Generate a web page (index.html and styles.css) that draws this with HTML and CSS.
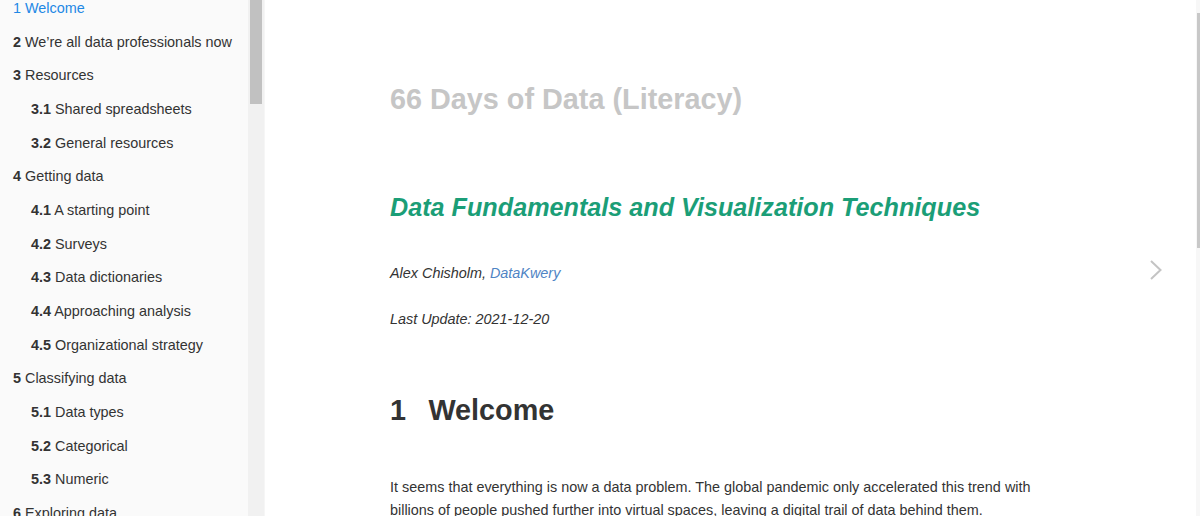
FILE: index.html
```html
<!DOCTYPE html>
<html lang="en">
<head>
    <meta charset="UTF-8">
    <meta name="viewport" content="width=device-width, initial-scale=1.0">
    <title>66 Days of Data (Literacy)</title>
    <link rel="stylesheet" href="styles.css">
</head>
<body>
    <div class="book">
        <nav class="book-summary">
            <ul class="summary">
                <li class="chapter active"><a href="#"><b>1</b> Welcome</a></li>
                <li class="chapter"><a href="#"><b>2</b> We’re all data professionals now</a></li>
                <li class="chapter"><a href="#"><b>3</b> Resources</a>
                    <ul>
                        <li class="chapter"><a href="#"><b>3.1</b> Shared spreadsheets</a></li>
                        <li class="chapter"><a href="#"><b>3.2</b> General resources</a></li>
                    </ul>
                </li>
                <li class="chapter"><a href="#"><b>4</b> Getting data</a>
                    <ul>
                        <li class="chapter"><a href="#"><b>4.1</b> A starting point</a></li>
                        <li class="chapter"><a href="#"><b>4.2</b> Surveys</a></li>
                        <li class="chapter"><a href="#"><b>4.3</b> Data dictionaries</a></li>
                        <li class="chapter"><a href="#"><b>4.4</b> Approaching analysis</a></li>
                        <li class="chapter"><a href="#"><b>4.5</b> Organizational strategy</a></li>
                    </ul>
                </li>
                <li class="chapter"><a href="#"><b>5</b> Classifying data</a>
                    <ul>
                        <li class="chapter"><a href="#"><b>5.1</b> Data types</a></li>
                        <li class="chapter"><a href="#"><b>5.2</b> Categorical</a></li>
                        <li class="chapter"><a href="#"><b>5.3</b> Numeric</a></li>
                    </ul>
                </li>
                <li class="chapter"><a href="#"><b>6</b> Exploring data</a></li>
            </ul>
            <div class="summary-scroll">
                <div class="summary-thumb"></div>
            </div>
        </nav>

        <main class="book-body">
            <div class="page-inner">
                <h1 class="title">66 Days of Data (Literacy)</h1>
                <p class="subtitle">Data Fundamentals and Visualization Techniques</p>
                <p class="author">Alex Chisholm, <a href="#">DataKwery</a></p>
                <p class="date">Last Update: 2021-12-20</p>

                <h1 class="section"><span class="header-section-number">1</span> Welcome</h1>
                <p class="text">It seems that everything is now a data problem. The global pandemic only accelerated this trend with billions of people pushed further into virtual spaces, leaving a digital trail of data behind them.</p>
            </div>

            <a class="navigation-next" href="#" aria-label="Next page">
                <svg width="14" height="22" viewBox="0 0 14 22">
                    <path d="M2 2 L11.5 11 L2 20" fill="none" stroke="#c4c4c4" stroke-width="2"/>
                </svg>
            </a>
        </main>

        <div class="page-scroll">
            <div class="page-thumb"></div>
        </div>
    </div>
</body>
</html>
```

FILE: styles.css
```css
html, body {
    height: 100%;
}
body {
    margin: 0;
    overflow: hidden;
    font-family: "Liberation Sans", Arial, sans-serif;
    font-size: 14.4px;
    color: #333;
    background-color: #fff;
}
.book {
    display: flex;
    height: 516px;
}

/* sidebar */
.book-summary {
    display: flex;
    width: 265px;
    flex-shrink: 0;
    background-color: #fafafa;
    overflow: hidden;
}
.summary {
    list-style: none;
    margin: -9px 0 0 0;
    padding: 0;
    width: 249px;
}
.summary ul {
    list-style: none;
    margin: 0;
    padding: 0 0 0 18px;
}
.summary a {
    display: block;
    padding: 6.85px 13px;
    line-height: 20px;
    color: #333;
    text-decoration: none;
    white-space: nowrap;
}
.summary li.active > a {
    color: #1e88e5;
}
.summary li.active > a b {
    font-weight: normal;
}
.summary-scroll {
    width: 16px;
    background-color: #f1f1f1;
    border-right: 1px solid #f6f6f6;
}
.summary-thumb {
    margin: 0 2px;
    height: 104px;
    background-color: #c1c1c1;
}

/* main page */
.book-body {
    flex: 1;
    position: relative;
}
.page-inner {
    width: 660px;
    padding-left: 125px;
}
.page-inner p {
    margin: 0;
}
.title {
    margin: 82px 0 0 0;
    font-size: 28.8px;
    line-height: 34px;
    color: #c6c6c6;
}
.subtitle {
    margin-top: 76px !important;
    font-size: 25.2px;
    line-height: 30px;
    font-weight: bold;
    font-style: italic;
    color: #1b9e77;
}
.author, .date {
    font-style: italic;
    line-height: 20px;
}
.author {
    margin-top: 41px !important;
}
.author a {
    color: #4f84c4;
    text-decoration: none;
}
.date {
    margin-top: 26px !important;
}
.section {
    margin: 64px 0 0 0;
    font-size: 28.8px;
    line-height: 34px;
    color: #333;
}
.header-section-number {
    padding-right: .5em;
}
.text {
    margin-top: 49px !important;
    line-height: 23px;
}
.navigation-next {
    position: absolute;
    left: 884px;
    top: 259px;
}

/* page scrollbar */
.page-scroll {
    width: 4px;
    flex-shrink: 0;
    background-color: #f7f7f7;
}
.page-thumb {
    margin: 13px 0 0 1px;
    width: 3px;
    height: 235px;
    background-color: #c8c8c8;
}
```
